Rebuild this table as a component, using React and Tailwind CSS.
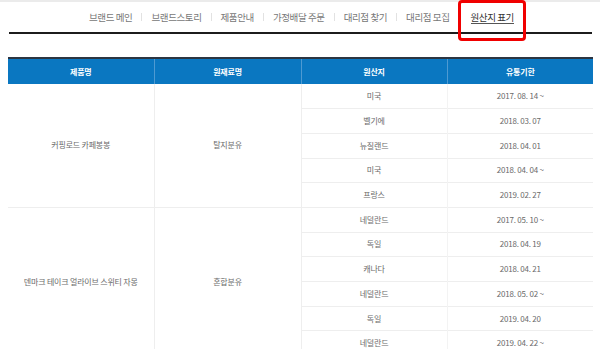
import React from "react";

const nav = ["브랜드 메인", "브랜드스토리", "제품안내", "가정배달 주문", "대리점 찾기", "대리점 모집", "원산지 표기"];

const groups = [
  {
    name: "커핑로드 카페봉봉",
    mat: "탈지분유",
    rows: [
      ["미국", "2017. 08. 14 ~"],
      ["벨기에", "2018. 03. 07"],
      ["뉴질랜드", "2018. 04. 01"],
      ["미국", "2018. 04. 04 ~"],
      ["프랑스", "2019. 02. 27"],
    ],
  },
  {
    name: "덴마크 테이크 얼라이브 스위티 자몽",
    mat: "혼합분유",
    rows: [
      ["네덜란드", "2017. 05. 10 ~"],
      ["독일", "2018. 04. 19"],
      ["캐나다", "2018. 04. 21"],
      ["네덜란드", "2018. 05. 02 ~"],
      ["독일", "2019. 04. 20"],
      ["네덜란드", "2019. 04. 22 ~"],
    ],
  },
];

export default function App() {
  return (
    <div
      className="relative w-[600px] h-[349px] overflow-hidden bg-white"
      style={{ fontFamily: '"Noto Sans CJK KR", "Noto Sans", sans-serif' }}
    >
      <div className="h-[2px] bg-[#ebebeb]" />
      <div className="h-[30px] flex items-center justify-center pl-[3px] text-[9.5px] tracking-[-0.4px] text-[#777]">
        {nav.map((t, i) => (
          <React.Fragment key={t}>
            {i > 0 && <span className="mx-[9px] w-px h-[8px] bg-[#e2e2e2]" />}
            <span
              className={
                i === nav.length - 1
                  ? "relative ml-[2px] text-[#333] border-b border-[#555] leading-[11px] pt-[2px]"
                  : "leading-[11px]"
              }
            >
              {t}
            </span>
          </React.Fragment>
        ))}
      </div>
      <div className="ml-[9px] mr-[8px] h-[2px] bg-[#1c1c1c]" />
      <div className="h-[23px]" />
      <table className="ml-[8px] w-[585px] border-collapse table-fixed text-[8px] tracking-[-0.2px] text-[#6a6a6a]">
        <thead>
          <tr className="border-t-2 border-[#2b3542] bg-[#0a77c1] text-white font-bold">
            <th className="h-[26px] w-[146px] font-bold border-r border-[#4e9ad2]">제품명</th>
            <th className="w-[147px] font-bold border-r border-[#4e9ad2]">원재료명</th>
            <th className="w-[146px] font-bold border-r border-[#4e9ad2]">원산지</th>
            <th className="font-bold">유통기한</th>
          </tr>
        </thead>
        <tbody>
          {groups.map((g) =>
            g.rows.map((r, i) => (
              <tr key={g.name + i} className="border-b border-[#eeeeee]">
                {i === 0 && (
                  <>
                    <td rowSpan={g.rows.length} className="text-center border-r border-[#eeeeee] align-middle">
                      {g.name}
                    </td>
                    <td rowSpan={g.rows.length} className="text-center border-r border-[#eeeeee] align-middle">
                      {g.mat}
                    </td>
                  </>
                )}
                <td className="h-[24.7px] text-center border-r border-[#f3f3f3]">{r[0]}</td>
                <td className="text-center">{r[1]}</td>
              </tr>
            ))
          )}
        </tbody>
      </table>
      <div className="absolute left-[458px] top-[0px] w-[68px] h-[41px] border-[3px] border-[#f00000] rounded-[4px]" />
    </div>
  );
}
